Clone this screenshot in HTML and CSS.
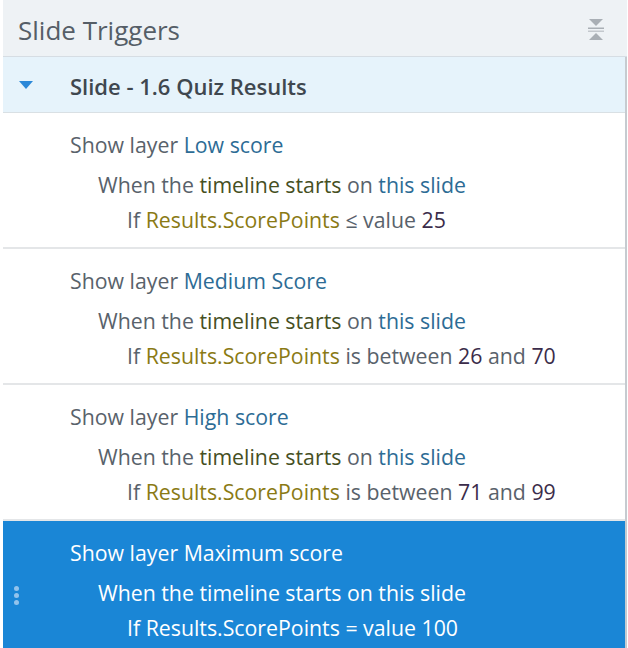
FILE: index.html
```html
<!DOCTYPE html>
<html lang="en">
<head>
<meta charset="utf-8">
<title>Slide Triggers</title>
<link rel="stylesheet" href="styles.css">
</head>
<body>
<div class="panel">
  <div class="header">
    <span class="title">Slide Triggers</span>
    <svg class="collapse" width="18" height="24" viewBox="0 0 18 24">
      <path d="M2 1 H16 L9 8 Z" fill="#a9afb5"/>
      <rect x="1" y="9.5" width="16" height="1.5" fill="#a9afb5"/>
      <rect x="1" y="12.5" width="16" height="1.5" fill="#c3c8cd"/>
      <path d="M2 22 H16 L9 15 Z" fill="#a9afb5"/>
    </svg>
  </div>
  <div class="list">
    <div class="slide-row">
      <svg class="caret" width="14" height="10" viewBox="0 0 14 10"><path d="M0 1 H14 L7 9 Z" fill="#2b88d8"/></svg>
      <span class="slide-name">Slide - 1.6 Quiz Results</span>
    </div>

    <div class="trigger">
      <div class="l1">Show layer <span class="obj">Low score</span></div>
      <div class="l2">When the <span class="evt">timeline starts</span> on <span class="obj">this slide</span></div>
      <div class="l3">If <span class="var">Results.ScorePoints</span> ≤ value <span class="num">25</span></div>
    </div>

    <div class="trigger">
      <div class="l1">Show layer <span class="obj">Medium Score</span></div>
      <div class="l2">When the <span class="evt">timeline starts</span> on <span class="obj">this slide</span></div>
      <div class="l3">If <span class="var">Results.ScorePoints</span> is between <span class="num">26</span> and <span class="num">70</span></div>
    </div>

    <div class="trigger">
      <div class="l1">Show layer <span class="obj">High score</span></div>
      <div class="l2">When the <span class="evt">timeline starts</span> on <span class="obj">this slide</span></div>
      <div class="l3">If <span class="var">Results.ScorePoints</span> is between <span class="num">71</span> and <span class="num">99</span></div>
    </div>

    <div class="trigger selected">
      <span class="grip"><i></i><i></i><i></i></span>
      <div class="l1">Show layer <span class="obj">Maximum score</span></div>
      <div class="l2">When the <span class="evt">timeline starts</span> on <span class="obj">this slide</span></div>
      <div class="l3">If <span class="var">Results.ScorePoints</span> = value <span class="num">100</span></div>
    </div>
  </div>
</div>
</body>
</html>
```

FILE: styles.css
```css
html, body {
  margin: 0;
  padding: 0;
  background: #ffffff;
  height: 648px;
  overflow: hidden;
}

.panel {
  margin-left: 3px;
  width: 624px;
  font-family: "Open Sans", "Noto Sans", sans-serif;
  color: #59626b;
}

.header {
  height: 56px;
  background: #eef2f5;
  border-bottom: 1px solid #d6dde3;
  display: flex;
  align-items: center;
  justify-content: space-between;
  padding: 0 22px 0 15px;
}

.title {
  font-size: 26px;
  color: #555e67;
  margin-top: 4px;
}

.collapse {
  display: block;
  margin-top: 3px;
}

.list {
  border-right: 2px solid #c6cbd0;
}

.slide-row {
  height: 55px;
  background: #e6f3fb;
  border-bottom: 1px solid #d9e0e4;
  display: flex;
  align-items: center;
  padding-left: 16px;
}

.caret {
  display: block;
  margin-right: 37px;
  margin-top: 1px;
}

.slide-name {
  font-size: 22px;
  font-weight: 600;
  color: #3f474f;
  margin-top: 2px;
}

.trigger {
  position: relative;
  height: 136px;
  box-sizing: border-box;
  padding-top: 14px;
  padding-left: 67px;
  border-bottom: 2px solid #e4e6e8;
  font-size: 21.3px;
  line-height: 35px;
}

.l2 {
  margin-top: 5px;
  padding-left: 28px;
}

.l3 {
  padding-left: 57px;
}

.obj { color: #2d6c95; }
.evt { color: #46501f; }
.var { color: #8a7a14; }
.num { color: #3b2c4a; }

.selected {
  background: #1a86d6;
  color: #ffffff;
  border-bottom: none;
}

.selected .obj,
.selected .evt,
.selected .var,
.selected .num {
  color: #ffffff;
}

.grip {
  position: absolute;
  left: 11px;
  top: 65px;
  display: flex;
  flex-direction: column;
  gap: 2px;
}

.grip i {
  display: block;
  width: 5px;
  height: 5px;
  border-radius: 50%;
  background: #93c3ec;
}
```
